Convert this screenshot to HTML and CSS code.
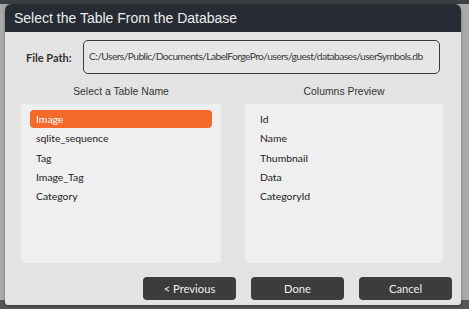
FILE: index.html
```html
<!DOCTYPE html>
<html lang="en">
  <head>
    <meta charset="UTF-8" />
    <title>Select the Table</title>
    <link rel="stylesheet" href="styles.css">
  </head>
  <body>
    <div class="dialog">
      <div class="dialog-header">Select the Table From the Database</div>
      <div class="dialog-body">
        <div class="path-row">
          <span class="path-label">File Path:</span>
          <div class="path-box">C:/Users/Public/Documents/LabelForgePro/users/guest/databases/userSymbols.db</div>
        </div>

        <div class="columns">
          <div class="column column-left">
            <p class="column-title">Select a Table Name</p>
            <ul class="list">
              <li class="list-item selected">Image</li>
              <li class="list-item">sqlite_sequence</li>
              <li class="list-item">Tag</li>
              <li class="list-item">Image_Tag</li>
              <li class="list-item">Category</li>
            </ul>
          </div>
          <div class="column column-right">
            <p class="column-title">Columns Preview</p>
            <ul class="list">
              <li class="list-item">Id</li>
              <li class="list-item">Name</li>
              <li class="list-item">Thumbnail</li>
              <li class="list-item">Data</li>
              <li class="list-item">CategoryId</li>
            </ul>
          </div>
        </div>

        <div class="buttons">
          <button class="btn">&lt; Previous</button>
          <button class="btn">Done</button>
          <button class="btn">Cancel</button>
        </div>
      </div>
    </div>
  </body>
</html>
```

FILE: styles.css
```css
* {
  margin: 0;
  padding: 0;
  box-sizing: border-box;
}

body {
  width: 469px;
  height: 309px;
  overflow: hidden;
  padding: 4px 8px 4px 5px;
  background: linear-gradient(to bottom, #3a3d42 0, #3a3d42 4px, #a9a9a9 4px, #a9a9a9 300px, #555 300px);
  font-family: Lato, "Open Sans", sans-serif;
}

.dialog {
  width: 456px;
  height: 301px;
  background-color: #e3e3e3;
  border-radius: 6px 6px 3px 3px;
  overflow: hidden;
  box-shadow: 0 1px 3px rgba(0, 0, 0, 0.35);
  display: flex;
  flex-direction: column;
}

.dialog-header {
  height: 28px;
  background-color: #272c34;
  color: #ececec;
  font-family: "Liberation Sans", Arial, sans-serif;
  font-size: 14px;
  line-height: 28px;
  padding-left: 9px;
}

.dialog-body {
  flex: 1;
  padding: 8px 9px 0 16px;
  display: flex;
  flex-direction: column;
}

.path-row {
  display: flex;
  align-items: center;
  height: 34px;
}

.path-label {
  width: 62px;
  padding-left: 5px;
  font-weight: bold;
  font-size: 11px;
  color: #333;
}

.path-box {
  width: 357px;
  height: 34px;
  border: 1.5px solid #3a3a3a;
  border-radius: 5px;
  background-color: #e6e6e6;
  font-size: 10.3px;
  letter-spacing: -0.6px;
  color: #3a3a3a;
  line-height: 31px;
  padding-left: 5px;
  white-space: nowrap;
  overflow: hidden;
}

.columns {
  display: flex;
  gap: 24px;
  margin-top: 12px;
}

.column-left {
  width: 200px;
}

.column-right {
  width: 198px;
}

.column-title {
  text-align: center;
  font-family: "Liberation Sans", Arial, sans-serif;
  font-size: 10.4px;
  color: #333;
  height: 18px;
}

.list {
  list-style: none;
  height: 159px;
  background-color: #efefef;
  border-radius: 3px;
  padding: 6px 9px;
}

.list-item {
  height: 19.3px;
  line-height: 18px;
  padding-left: 6px;
  font-size: 10.4px;
  color: #222;
}

.list-item.selected {
  background-color: #f2692a;
  color: #fff;
  border-radius: 4px;
  height: 18px;
  margin-bottom: 1.3px;
}

.buttons {
  display: flex;
  justify-content: flex-end;
  gap: 15px;
  margin-top: 14px;
}

.btn {
  width: 93px;
  height: 23px;
  border: none;
  border-radius: 4px;
  background-color: #3c3c3c;
  color: #f0f0f0;
  font-family: Lato, "Open Sans", sans-serif;
  font-size: 11.2px;
}
```
